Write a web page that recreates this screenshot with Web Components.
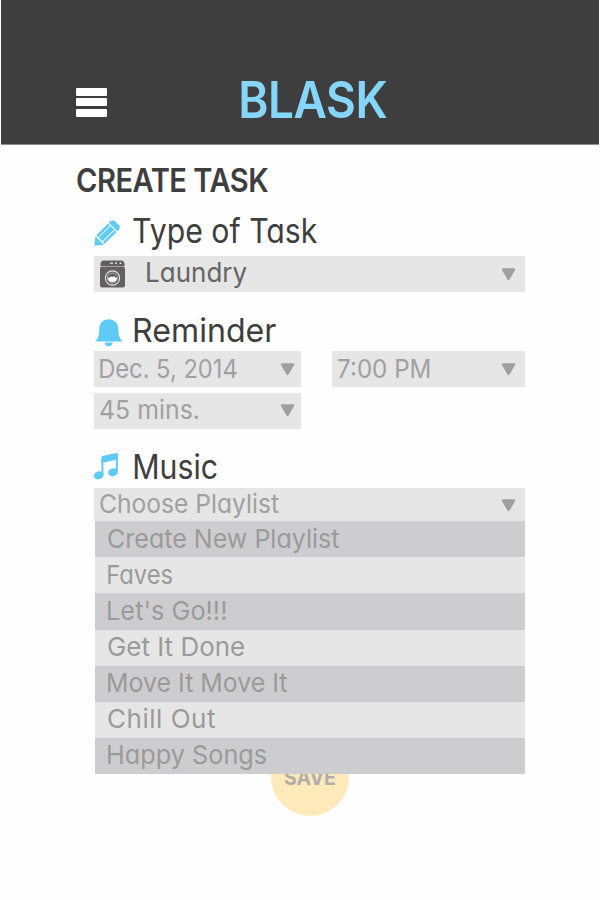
<!DOCTYPE html>
<html lang="en">
<head>
<meta charset="utf-8">
<title>Blask</title>
<style>
body{margin:0;background:#fefefe;font-family:Inter,"Open Sans",sans-serif;color:#3e3e3e}
</style>
</head>
<body>
<blask-app></blask-app>
<script>
const define=(name,html,setup)=>{
  const tpl=document.createElement('template');
  tpl.innerHTML=html;
  customElements.define(name,class extends HTMLElement{
    connectedCallback(){
      if(this.shadowRoot)return;
      this.attachShadow({mode:'open'}).append(tpl.content.cloneNode(true));
      if(setup)setup.call(this,this.shadowRoot);
    }
  });
};

/* A single line of text tracked so that its ink spans the given width. */
define('fit-text',`<style>
:host{display:block;white-space:pre;line-height:1;font-feature-settings:"cv11"}
span{display:inline-block;transform-origin:0 50%}
</style><span><slot></slot></span>`,function(root){
  const size=+this.getAttribute('size'),weight=this.getAttribute('weight')||'400',want=+this.getAttribute('width');
  this.style.fontSize=size+'px';this.style.fontWeight=weight;
  const s=root.querySelector('span');
  const t=root.querySelector('slot').assignedNodes({flatten:true}).map(n=>n.textContent).join('');
  const c=document.createElement('canvas').getContext('2d');
  c.font=weight+' '+size+'px Inter';
  const a=c.measureText(t),left=-a.actualBoundingBoxLeft,right=a.width-a.actualBoundingBoxRight;
  const ink=s.getBoundingClientRect().width-left-right;
  const k=Math.max(.9,Math.min(1,want/ink));
  const sp=(want/k-ink)/(t.length-1);
  s.style.letterSpacing=sp+'px';
  s.style.transform='translateX('+(-left*k)+'px) scaleX('+k+')';
});

define('menu-icon',`<style>
:host{display:grid;gap:2.7px;width:31px;align-self:flex-start}
i{height:7.8px;border-radius:1px;background:#fff}
</style><i></i><i></i><i></i>`);

define('app-header',`<style>
:host{display:flex;box-sizing:border-box;height:145px;margin:0 1px;padding:81px 0 0 75px;background:#3e3e3e;border-bottom:1px solid #8e8c8d}
menu-icon{margin:6.8px 133.5px 0 0}
fit-text{color:#85d6fa;margin-top:-7px}
</style><menu-icon></menu-icon><fit-text size="51" width="146" weight="600"><slot></slot></fit-text>`);

define('section-title',`<style>
:host{display:flex;height:34px;align-items:center}
.i{width:39.7px;height:34px;flex:none}
</style><div class="i"><slot name="icon"></slot></div><slot></slot>`);

define('select-box',`<style>
:host{display:flex;box-sizing:border-box;height:36px;align-items:center;background:#e6e6e6;padding:0 9px 0 6px;color:#a1a0a0}
slot{display:block;flex:1}
svg{margin-left:auto;width:15px;height:13px;flex:none}
</style><slot></slot><svg viewBox="0 0 15 13"><path d="M2 1.5H13L7.5 11Z" fill="#a09f9f" stroke="#a09f9f" stroke-width="2.4" stroke-linejoin="round"/></svg>`);

define('play-list',`<style>
:host{display:grid;grid-template-rows:repeat(7,36.1px);margin-left:.5px;position:relative;z-index:1;color:#9b9a9a}
::slotted(*){box-sizing:border-box;padding:4.4px 0 0 13.5px;background:#e6e6e6}
::slotted(:nth-child(odd)){background:#cdcdcf}
</style><slot></slot>`);

define('save-button',`<style>
:host{display:flex;box-sizing:border-box;width:78px;height:78px;border-radius:50%;background:#fde9b9;color:#b0aeaa;padding:30.5px 0 0 13.5px;margin:-35.7px 0 0 176.7px}
</style><fit-text size="19.5" width="51" weight="700"><slot></slot></fit-text>`);

define('pencil-icon',`<style>:host,svg{display:block;width:29px;height:34px}</style>
<svg viewBox="0 0 29 34"><g transform="translate(.3 30.8) rotate(-45)" fill="#5ecbf6"><path d="M0 0 7.5-6V6Z"/><path d="M8.8-6H25.5V-3.4H8.8ZM8.8-2.5H25.5V2.5H8.8ZM8.8 3.4H25.5V6H8.8Z"/><path d="M26.6-6H29Q32-5.5 32-3V3Q32 5.5 29 6H26.6Z"/></g></svg>`);

define('bell-icon',`<style>:host,svg{display:block;width:30px;height:34px}</style>
<svg viewBox="0 0 30 34"><path d="M1 27.4C5 24.4 5.2 19.5 5.2 15 5.2 9 9.5 5.3 14.7 5.3S24.2 9 24.3 15C24.3 19.5 24.8 24.4 28.8 27.4ZM10.7 28.4H18.7C18.2 31.2 16.9 32.2 14.7 32.2S11.2 31.2 10.7 28.4Z" fill="#5ecbf6"/></svg>`);

define('music-icon',`<style>:host,svg{display:block;width:29px;height:34px}</style>
<svg viewBox="0 0 29 34"><g transform="translate(0 -1)"><path d="M8.4 9.5V25M22.8 5V21" fill="none" stroke="#5ecbf6" stroke-width="2"/><path d="M7.4 7.5Q7.4 6.3 8.5 6L22.5 3Q23.8 2.8 23.8 4V9.6L7.4 13Z" fill="#5ecbf6"/><ellipse cx="4.8" cy="25.3" rx="5" ry="3.9" transform="rotate(-16 4.8 25.3)" fill="#5ecbf6"/><ellipse cx="19" cy="22.2" rx="5" ry="3.9" transform="rotate(-16 19 22.2)" fill="#5ecbf6"/></g></svg>`);

define('washer-icon',`<style>:host,svg{display:block;width:25px;height:28px}:host{flex:none}</style>
<svg viewBox="0 0 25 28"><path d="M3 .5H22Q24 .5 24.3 3L24.8 6H.2L.7 3Q1 .5 3 .5Z" fill="#626061"/><rect y="6.4" width="25" height="21" rx="2" fill="#626061"/><g fill="#e6e6e6"><rect x="10" y="2.6" width="3" height="1.2"/><circle cx="16" cy="3.2" r=".9"/><circle cx="20.5" cy="3.2" r=".9"/></g><circle cx="12.5" cy="18" r="7.1" fill="none" stroke="#e6e6e6" stroke-width="1.1"/><circle cx="12.5" cy="18" r="5" fill="none" stroke="#c9c9c9" stroke-width=".7"/><path d="M7.8 17.5Q9 18 10 17.2 11 15.8 12.4 17 14.2 15.5 15 17.2 16 18 17.2 17.3 17 22 12.5 22 8 22 7.8 17.5Z" fill="#fff"/></svg>`);

define('blask-app',`<style>
:host{display:block;height:900px;overflow:hidden}
main{display:flex;flex-direction:column;width:431px;margin-left:94px}
.h{margin:16px 0 0 -17px;height:32px;padding-top:3.5px;box-sizing:border-box}
.type{margin-top:22px}
.type fit-text{margin-left:-1px}
.sel1{margin-top:7px;color:#666465}
.sel1 div{display:flex;align-items:center;gap:21.5px}
.sel1 fit-text{margin-top:-3px}
.rem{margin-top:22px}
.rem fit-text{margin-top:-1px}
.grid{display:grid;grid-template-columns:207px 193px;gap:5.5px 31px;margin-top:3px}
.n{padding-right:6px}
.mus{margin-top:22px}
.grid fit-text{margin-top:-1px}
.open{height:33.3px;margin-top:3.5px;padding-top:2px}
.open fit-text{margin-top:-3px}
</style>
<app-header>BLASK</app-header>
<main>
<fit-text class="h" size="32.3" width="191" weight="600">CREATE TASK</fit-text>
<section-title class="type"><pencil-icon slot="icon"></pencil-icon><fit-text size="33.5" width="184">Type of Task</fit-text></section-title>
<select-box class="sel1"><div><washer-icon></washer-icon><fit-text size="27" width="100">Laundry</fit-text></div></select-box>
<section-title class="rem"><bell-icon slot="icon"></bell-icon><fit-text size="33" width="142">Reminder</fit-text></section-title>
<div class="grid">
<select-box class="n"><fit-text size="26" width="137">Dec. 5, 2014</fit-text></select-box>
<select-box><fit-text size="26" width="92">7:00 PM</fit-text></select-box>
<select-box class="n"><fit-text size="26" width="98.5">45 mins.</fit-text></select-box>
</div>
<section-title class="mus"><music-icon slot="icon"></music-icon><fit-text size="33.5" width="83">Music</fit-text></section-title>
<select-box class="open"><fit-text size="26" width="178.5">Choose Playlist</fit-text></select-box>
<play-list>
<div><fit-text size="26" width="231">Create New Playlist</fit-text></div>
<div><fit-text size="26" width="64.5">Faves</fit-text></div>
<div><fit-text size="26" width="118">Let's Go!!!</fit-text></div>
<div><fit-text size="26" width="136">Get It Done</fit-text></div>
<div><fit-text size="26" width="179">Move It Move It</fit-text></div>
<div><fit-text size="26" width="107">Chill Out</fit-text></div>
<div><fit-text size="26" width="158.5">Happy Songs</fit-text></div>
</play-list>
<save-button>SAVE</save-button>
</main>`);
</script>
</body>
</html>
